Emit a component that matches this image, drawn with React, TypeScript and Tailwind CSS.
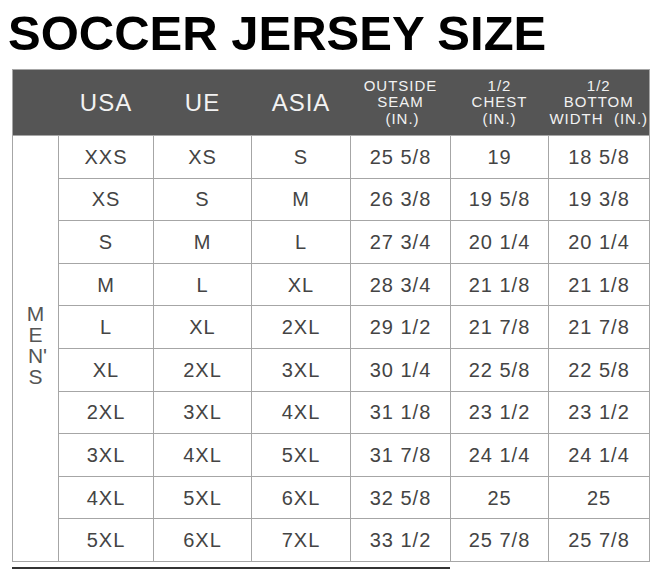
import React from "react";

const rows = [
  ["XXS", "XS", "S", "25 5/8", "19", "18 5/8"],
  ["XS", "S", "M", "26 3/8", "19 5/8", "19 3/8"],
  ["S", "M", "L", "27 3/4", "20 1/4", "20 1/4"],
  ["M", "L", "XL", "28 3/4", "21 1/8", "21 1/8"],
  ["L", "XL", "2XL", "29 1/2", "21 7/8", "21 7/8"],
  ["XL", "2XL", "3XL", "30 1/4", "22 5/8", "22 5/8"],
  ["2XL", "3XL", "4XL", "31 1/8", "23 1/2", "23 1/2"],
  ["3XL", "4XL", "5XL", "31 7/8", "24 1/4", "24 1/4"],
  ["4XL", "5XL", "6XL", "32 5/8", "25", "25"],
  ["5XL", "6XL", "7XL", "33 1/2", "25 7/8", "25 7/8"],
];

const widths = ["w-[46px]", "w-[95px]", "w-[98px]", "w-[99px]", "w-[100px]", "w-[98px]", "w-[101px]"];

export default function App() {
  return (
    <div className="w-[660px] h-[577px] bg-white font-['Liberation_Sans',Arial,sans-serif] pt-[9px] overflow-hidden">
      <h1 className="pl-[8px] text-[49px] leading-[49px] font-bold text-black">
        SOCCER JERSEY SIZE
      </h1>

      <table className="ml-[12px] mt-[11px] table-fixed border-collapse w-[637px]">
        <colgroup>
          {widths.map((w, i) => (
            <col key={i} className={w} />
          ))}
        </colgroup>
        <thead>
          <tr className="h-[66px] bg-[#555555] text-[#f2f2f2] border border-[#a6a6a6]">
            <th />
            <th className="text-[24px] font-normal tracking-[1px]">USA</th>
            <th className="text-[24px] font-normal tracking-[1px]">UE</th>
            <th className="text-[24px] font-normal tracking-[1px]">ASIA</th>
            <th className="text-[15px] leading-[16.5px] font-normal tracking-[1px]">
              OUTSIDE
              <br />
              SEAM
              <br />
              <span className="pl-[4px]">(IN.)</span>
            </th>
            <th className="text-[15px] leading-[16.5px] font-normal tracking-[1px]">
              1/2
              <br />
              CHEST
              <br />
              (IN.)
            </th>
            <th className="text-[15px] leading-[16.5px] font-normal tracking-[1px] whitespace-nowrap">
              1/2
              <br />
              BOTTOM
              <br />
              WIDTH&nbsp;&nbsp;(IN.)
            </th>
          </tr>
        </thead>
        <tbody className="text-[#444444] text-[20px] tracking-[1px]">
          {rows.map((r, i) => (
            <tr key={i} className="h-[42.6px]">
              {i === 0 && (
                <td
                  rowSpan={10}
                  className="border border-[#a6a6a6] text-center align-middle text-[#555555] text-[21px] leading-[21px] tracking-normal"
                >
                  <div className="flex flex-col items-center pb-[6px]">
                    <span>M</span>
                    <span>E</span>
                    <span className="pl-[4px]">N'</span>
                    <span>S</span>
                  </div>
                </td>
              )}
              {r.map((c, j) => (
                <td key={j} className="border border-[#a6a6a6] text-center align-middle whitespace-nowrap">
                  {c}
                </td>
              ))}
            </tr>
          ))}
        </tbody>
      </table>

      <div className="ml-[12px] mt-[5px] w-[438px] h-[2px] bg-[#333333]" />
    </div>
  );
}
